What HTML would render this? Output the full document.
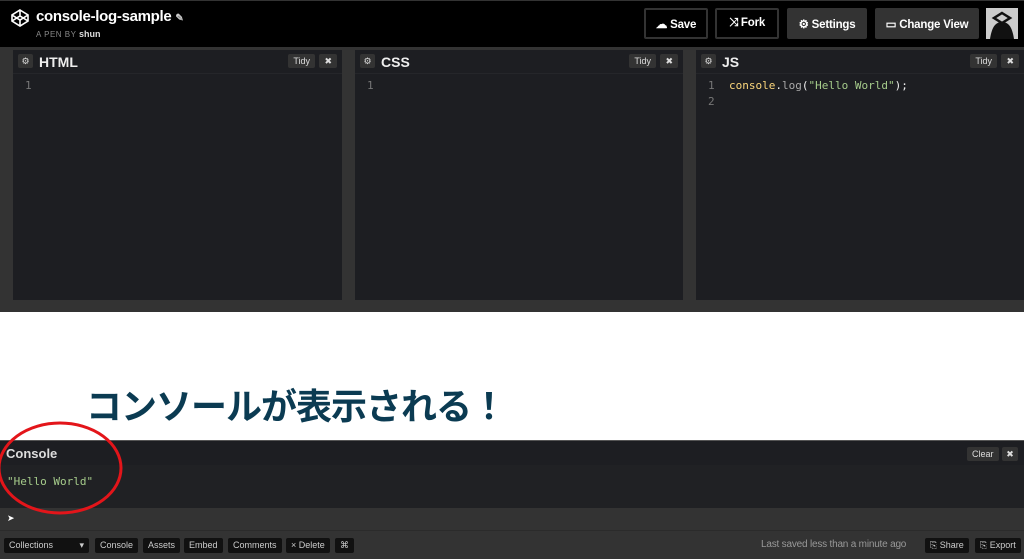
<!DOCTYPE html>
<html><head><meta charset="utf-8"><style>
*{margin:0;padding:0;box-sizing:border-box}
body{width:1024px;height:559px;overflow:hidden;background:#fff;font-family:"Liberation Sans",sans-serif;position:relative}
.abs{position:absolute}
.hdr{left:0;top:0;width:1024px;height:47px;background:#000;border-top:1px solid #333}
.btn{position:absolute;top:8px;height:31px;color:#fff;font-size:11.5px;font-weight:bold;display:flex;align-items:center;justify-content:center;gap:5px;border-radius:2px;letter-spacing:-.2px}
.ed{top:47px;left:0;width:1024px;height:265px;background:#333}
.pane{position:absolute;top:50px;height:250px;background:#1d1e22}
.ph{height:24px;position:relative;border-bottom:1px solid #25262a}
.ph .g{position:absolute;left:5px;top:4px;width:15px;height:14px;background:#333;border-radius:2px;color:#ddd;font-size:9px;text-align:center;line-height:14px}
.ph .t{position:absolute;left:26px;top:4px;color:#eee;font-weight:bold;font-size:14px}
.ph .td{position:absolute;top:4px;height:14px;background:#333;color:#ddd;font-size:9px;line-height:14px;padding:0 5px;border-radius:2px}
.ln{position:absolute;left:12px;top:28px;color:#777;font-family:"DejaVu Sans Mono",monospace;font-size:11px;line-height:16px}
.code{font-family:"DejaVu Sans Mono",monospace;font-size:11px;line-height:16px}
.fb{position:absolute;top:538px;height:15px;background:#111;color:#ccc;font-size:9px;line-height:15px;padding:0 5px;border-radius:2px}
</style></head><body>
<div class="abs hdr"></div>
<svg class="abs" style="left:10px;top:8px" width="20" height="20" viewBox="0 0 20 20" fill="none" stroke="#fff" stroke-width="1.6"><path d="M10 2 L18 7 V13 L10 18 L2 13 V7 Z M2 7 L10 12 L18 7 M2 13 L10 8 L18 13 M10 2 V8 M10 12 V18"/></svg>
<div class="abs" style="left:36px;top:8px;color:#fff;font-size:15px;font-weight:bold;letter-spacing:-.3px">console-log-sample <span style="font-size:10px;color:#ccc">✎</span></div>
<div class="abs" style="left:36px;top:29px;color:#888;font-size:8px;letter-spacing:.5px">A PEN BY <b style="color:#ddd;font-size:9px;letter-spacing:0">shun</b></div>
<div class="btn" style="left:644px;width:64px;border:2px solid #333">☁ Save</div>
<div class="btn" style="left:715px;width:64px;border:2px solid #333">⤨ Fork</div>
<div class="btn" style="left:787px;width:80px;background:#333">⚙ Settings</div>
<div class="btn" style="left:875px;width:104px;background:#333">▭ Change View</div>
<div class="abs" style="left:986px;top:8px;width:32px;height:31px;background:#ccc"><svg width="32" height="31" viewBox="0 0 32 31"><path d="M4 31 C6 18 10 14 16 14 C22 14 26 18 28 31Z" fill="#111"/><path d="M16 5 L24 10 L16 15 L8 10Z" fill="none" stroke="#111" stroke-width="2.5"/></svg></div>
<div class="abs ed"></div>
<div class="pane" style="left:13px;width:329px"><div class="ph"><span class="g">⚙</span><span class="t">HTML</span><span class="td" style="right:27px">Tidy</span><span class="td" style="right:5px">✖</span></div><div class="ln">1</div></div>
<div class="pane" style="left:355px;width:328px"><div class="ph"><span class="g">⚙</span><span class="t">CSS</span><span class="td" style="right:27px">Tidy</span><span class="td" style="right:5px">✖</span></div><div class="ln">1</div></div>
<div class="pane" style="left:696px;width:328px"><div class="ph"><span class="g">⚙</span><span class="t">JS</span><span class="td" style="right:27px">Tidy</span><span class="td" style="right:5px">✖</span></div><div class="ln">1<br>2</div>
<div class="abs code" style="left:33px;top:28px;color:#eee"><span style="color:#fcd77c">console</span>.<span style="color:#aaa">log</span>(<span style="color:#a6cc8b">"Hello World"</span>);</div></div>
<div class="abs" style="left:86px;top:378px;font-family:'Noto Sans CJK JP',sans-serif;font-weight:bold;font-size:36px;color:#0b3b52;letter-spacing:-1px">コンソールが表示される！</div>
<div class="abs" style="left:0;top:440px;width:1024px;height:25px;background:#1d1e22;border-top:1px solid #555"></div>
<div class="abs" style="left:6px;top:446px;color:#ddd;font-size:13px;font-weight:bold">Console</div>
<div class="abs" style="left:967px;top:447px;height:14px;background:#333;color:#ddd;font-size:9px;line-height:14px;padding:0 5px;border-radius:2px">Clear</div>
<div class="abs" style="left:1002px;top:447px;width:16px;height:14px;background:#333;color:#ddd;font-size:9px;line-height:14px;text-align:center;border-radius:2px">✖</div>
<div class="abs" style="left:0;top:465px;width:1024px;height:43px;background:#202124"></div>
<div class="abs code" style="left:7px;top:474px;color:#a6cc8b">"Hello World"</div>
<div class="abs" style="left:0;top:508px;width:1024px;height:51px;background:#333"></div>
<div class="abs" style="left:7px;top:513px;color:#fff;font-size:9px">➤</div>
<div class="abs" style="left:0;top:530px;width:1024px;height:1px;background:#2b2b2b"></div>
<div class="fb" style="left:4px;width:85px">Collections <span style="float:right">▾</span></div>
<div class="fb" style="left:95px">Console</div>
<div class="fb" style="left:143px">Assets</div>
<div class="fb" style="left:184px">Embed</div>
<div class="fb" style="left:228px">Comments</div>
<div class="fb" style="left:286px">× Delete</div>
<div class="fb" style="left:335px">⌘</div>
<div class="abs" style="left:761px;top:539px;color:#999;font-size:10px;letter-spacing:-.2px">Last saved less than a minute ago</div>
<div class="fb" style="left:925px">⎘ Share</div>
<div class="fb" style="left:975px">⎘ Export</div>
<svg class="abs" style="left:0;top:420px" width="130" height="100"><ellipse cx="60" cy="48" rx="61" ry="45" fill="none" stroke="#e3151a" stroke-width="3"/></svg>
</body></html>
